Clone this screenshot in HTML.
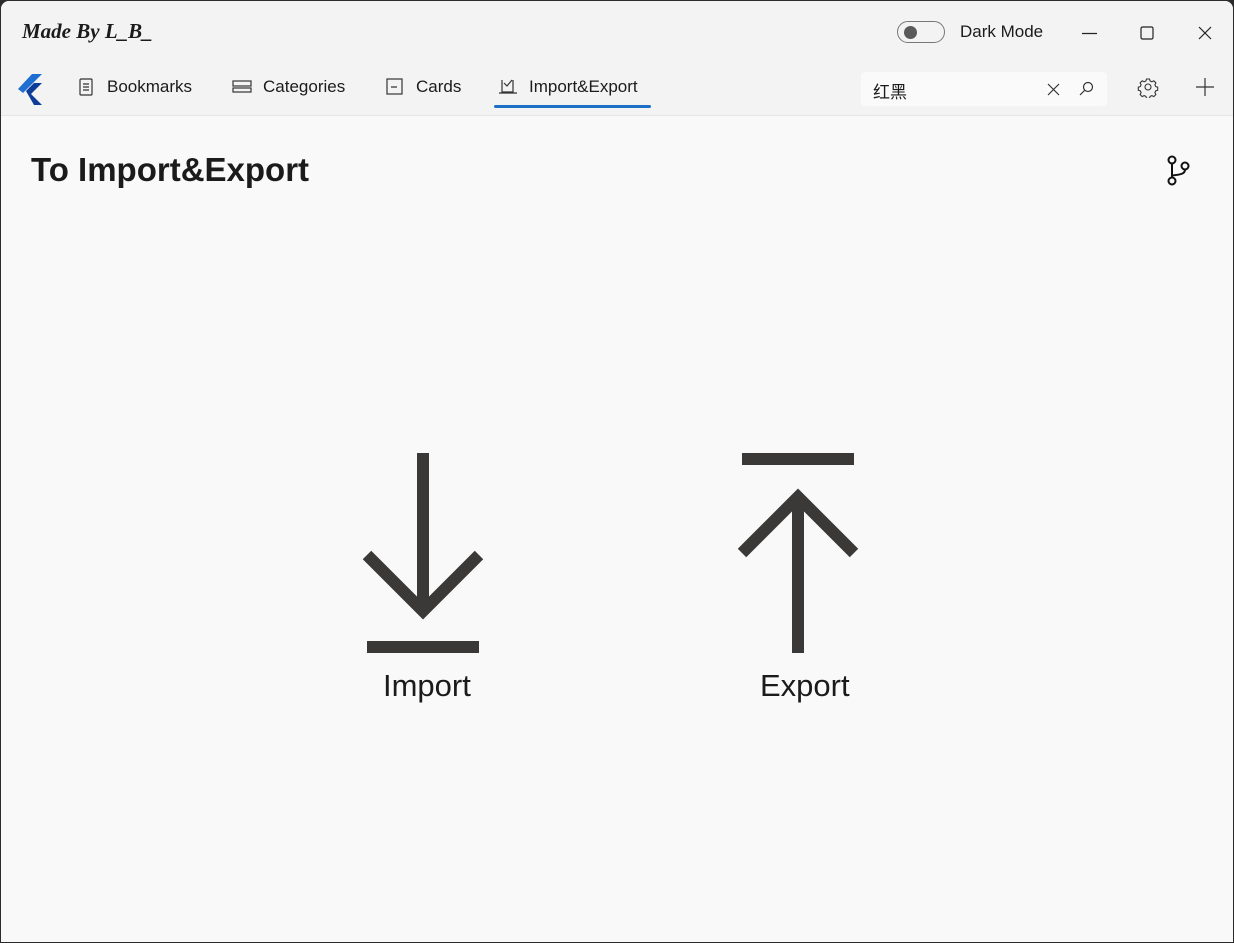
<!DOCTYPE html>
<html><head><meta charset="utf-8"><style>
html,body{margin:0;padding:0;width:1234px;height:943px;overflow:hidden;background:#2b2b2b;font-family:"Segoe UI","Liberation Sans",sans-serif;}
.win{position:absolute;left:1px;top:1px;width:1232px;height:941px;background:#f9f9f9;border-radius:8px 8px 0 0;overflow:hidden;}
.head{position:absolute;left:0;top:0;width:1232px;height:114px;background:#f3f3f3;border-bottom:1px solid #e5e5e5;}
.t{position:absolute;color:#1b1b1b;white-space:nowrap;}
</style></head><body><div class="win">
<div class="head">
<div class="t" style="left:21px;top:18px;font-family:'Liberation Serif',serif;font-style:italic;font-weight:bold;font-size:21px;">Made By L_B_</div>
<div style="position:absolute;left:896px;top:20px;width:48px;height:22px;border:1px solid #777;border-radius:12px;box-sizing:border-box;"></div>
<div style="position:absolute;left:903px;top:25px;width:13px;height:13px;border-radius:50%;background:#5a5a5a;"></div>
<div class="t" style="left:959px;top:21px;font-size:17px;">Dark Mode</div>
<svg style="position:absolute;left:1075px;top:20px" width="145" height="25" stroke="#222" stroke-width="1.2" fill="none">
<line x1="6" y1="12.5" x2="21" y2="12.5"/><rect x="65" y="6" width="12" height="12" rx="1.5"/><line x1="123" y1="6" x2="135" y2="18"/><line x1="135" y1="6" x2="123" y2="18"/></svg>
<svg style="position:absolute;left:14px;top:70px" width="30" height="36"><polygon points="3,18 17,3 27,3 8,22" fill="#1f6fd1"/><polygon points="11,20 19,12 27,12 16,23 27,34 19,34" fill="#0d3d99"/></svg>
<svg style="position:absolute;left:76px;top:76px" width="20" height="20" stroke="#333" fill="none" stroke-width="1.2"><rect x="3" y="2" width="12" height="16" rx="1"/><line x1="6" y1="7" x2="12" y2="7"/><line x1="6" y1="10" x2="12" y2="10"/><line x1="6" y1="13" x2="12" y2="13"/></svg>
<div class="t" style="left:106px;top:76px;font-size:17px;">Bookmarks</div>
<svg style="position:absolute;left:231px;top:76px" width="22" height="20" stroke="#333" fill="none" stroke-width="1.2"><rect x="1" y="4" width="18" height="5"/><rect x="1" y="11" width="18" height="4"/></svg>
<div class="t" style="left:262px;top:76px;font-size:17px;">Categories</div>
<svg style="position:absolute;left:384px;top:76px" width="20" height="20" stroke="#333" fill="none" stroke-width="1.2"><rect x="2" y="2" width="15" height="15"/><line x1="6" y1="10" x2="12" y2="10"/></svg>
<div class="t" style="left:415px;top:76px;font-size:17px;">Cards</div>
<svg style="position:absolute;left:497px;top:76px" width="20" height="20" stroke="#333" fill="none" stroke-width="1.2"><path d="M4 3v12h11V3M1 16h18M6 6l3 3 5-6"/></svg>
<div class="t" style="left:528px;top:76px;font-size:17px;">Import&amp;Export</div>
<div style="position:absolute;left:493px;top:104px;width:157px;height:3px;border-radius:2px;background:#1f6fc6;"></div>
<div style="position:absolute;left:860px;top:71px;width:246px;height:34px;background:#fafafa;border-radius:4px;"></div>
<div class="t" style="left:872px;top:77px;font-size:17px;font-family:'Liberation Sans','Noto Sans CJK SC',sans-serif;">红黑</div>
<svg style="position:absolute;left:1044px;top:80px" width="55" height="18" stroke="#333" fill="none" stroke-width="1.2"><path d="M3 3l11 11M14 3L3 14"/><circle cx="43" cy="6" r="4.5"/><line x1="39.5" y1="9.5" x2="35" y2="14"/></svg>
<svg style="position:absolute;left:1136px;top:75px" width="22" height="22" stroke="#333" fill="none" stroke-width="1.1"><circle cx="11" cy="11" r="3"/><path d="M9.5 3h3l.6 2 1.8.8 1.9-1 2.1 2.1-1 1.9.8 1.8 2 .6v3l-2 .6-.8 1.8 1 1.9-2.1 2.1-1.9-1-1.8.8-.6 2h-3l-.6-2-1.8-.8-1.9 1-2.1-2.1 1-1.9-.8-1.8-2-.6v-3l2-.6.8-1.8-1-1.9 2.1-2.1 1.9 1 1.8-.8z"/></svg>
<svg style="position:absolute;left:1193px;top:75px" width="22" height="22" stroke="#333" fill="none" stroke-width="1.2"><path d="M11 2v18M2 11h18"/></svg>
</div>
<div class="t" style="left:30px;top:150px;font-size:33px;font-weight:600;">To Import&amp;Export</div>
<svg style="position:absolute;left:1162px;top:152px" width="30" height="34" stroke="#111" fill="none" stroke-width="2"><circle cx="9" cy="7" r="3.5"/><circle cx="9" cy="28" r="3.5"/><circle cx="22" cy="13" r="3.5"/><path d="M9 10.5v14M22 16.5c0 4-3 5-13 6"/></svg>
<svg style="position:absolute;left:0;top:0" width="1232" height="941" stroke="#3a3937" stroke-width="12" fill="none">
<line x1="422" y1="452" x2="422" y2="612"/><polyline points="366,554 422,610 478,554"/><line x1="366" y1="646" x2="478" y2="646" />
<line x1="741" y1="458" x2="853" y2="458"/><line x1="797" y1="496" x2="797" y2="652"/><polyline points="741,552 797,496 853,552"/>
</svg>
<div class="t" style="left:382px;top:667px;font-size:31px;">Import</div>
<div class="t" style="left:759px;top:667px;font-size:31px;">Export</div>
</div></body></html>
